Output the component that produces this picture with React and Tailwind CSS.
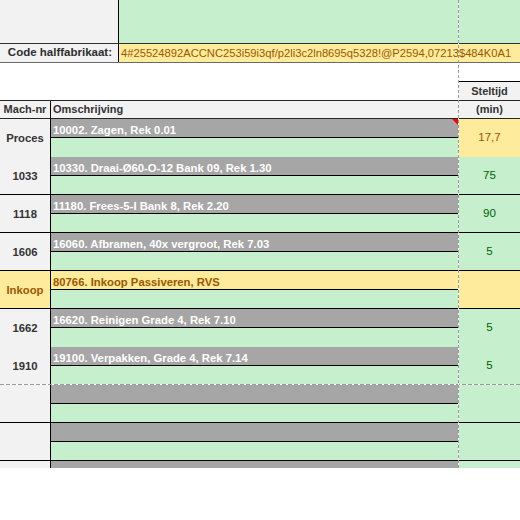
const groups = [
  {
    sep: 'solid',
    ops: [
      { mach: 'Proces', desc: '10002. Zagen, Rek 0.01', stelt: '17,7', steltYellow: true, flag: true },
      { mach: '1033', desc: '10330. Draai-Ø60-O-12 Bank 09, Rek 1.30', stelt: '75' },
    ],
  },
  { sep: 'solid', ops: [{ mach: '1118', desc: '11180. Frees-5-I Bank 8, Rek 2.20', stelt: '90' }] },
  { sep: 'solid', ops: [{ mach: '1606', desc: '16060. Afbramen, 40x vergroot, Rek 7.03', stelt: '5' }] },
  { sep: 'solid', ops: [{ mach: 'Inkoop', desc: '80766. Inkoop Passiveren, RVS', inkoop: true }] },
  {
    sep: 'dashed',
    ops: [
      { mach: '1662', desc: '16620. Reinigen Grade 4, Rek 7.10', stelt: '5' },
      { mach: '1910', desc: '19100. Verpakken, Grade 4, Rek 7.14', stelt: '5' },
    ],
  },
  { sep: 'solid', ops: [{}] },
  { sep: 'solid', ops: [{}] },
];

function Group({ group }) {
  const h = group.ops.length === 2 ? 'h-[75px]' : 'h-[37px]';
  return (
    <>
      <div className={`flex ${h} overflow-hidden`}>
        {/* Mach-nr */}
        <div className="w-[51px] shrink-0 border-r border-black flex flex-col">
          {group.ops.map((op, i) => (
            <div
              key={i}
              className={`h-[38px] shrink-0 flex items-center justify-center text-[11.3px] font-bold ${
                op.inkoop ? 'bg-[#ffeb9c] text-[#9c5700]' : 'bg-[#f2f2f2] text-[#333]'
              }`}
            >
              {op.mach}
            </div>
          ))}
        </div>

        {/* Omschrijving */}
        <div className="w-[408px] shrink-0 flex flex-col">
          {group.ops.map((op, i) => (
            <div key={i} className="h-[38px] shrink-0 flex flex-col">
              <div
                className={`relative h-[19px] shrink-0 border-b border-black flex items-end pl-[2px] text-[11.3px] leading-[14px] font-bold whitespace-nowrap ${
                  op.inkoop ? 'bg-[#ffeb9c] text-[#9c5700]' : 'bg-[#a6a6a6] text-white'
                }`}
              >
                {op.desc}
                {op.flag && (
                  <svg className="absolute top-0 right-[1px]" width="6" height="6" viewBox="0 0 6 6">
                    <polygon points="0,0 6,0 6,6" fill="#ff0000" />
                  </svg>
                )}
              </div>
              <div className="h-[19px] shrink-0 bg-[#c6efce]" />
            </div>
          ))}
        </div>

        {/* Steltijd */}
        <div className="flex-1 flex flex-col">
          {group.ops.map((op, i) => (
            <div
              key={i}
              className={`h-[38px] shrink-0 flex items-center justify-center text-[11.5px] ${
                op.steltYellow || op.inkoop ? 'bg-[#ffeb9c] text-[#9c5700]' : 'bg-[#c6efce] text-[#006100]'
              }`}
            >
              {op.stelt}
            </div>
          ))}
        </div>
      </div>
      {group.sep === 'dashed' ? (
        <div className="h-px bg-[repeating-linear-gradient(to_right,#9a9a9a_0_4px,#ffffff_4px_6px)]" />
      ) : (
        <div className="h-px bg-black" />
      )}
    </>
  );
}

export default function App() {
  return (
    <div className="relative w-[520px] h-[520px] overflow-hidden bg-white font-['Liberation_Sans',Arial,sans-serif] text-[#333]">
      {/* Top block */}
      <div className="flex h-[43px]">
        <div className="w-[119px] shrink-0 bg-[#f2f2f2] border-r border-black" />
        <div className="flex-1 bg-[#c6efce]" />
      </div>
      <div className="h-px bg-[#303030]" />

      {/* Code halffabrikaat */}
      <div className="flex h-[18px]">
        <div className="w-[119px] shrink-0 bg-[#f2f2f2] border-r border-black flex items-center justify-end pr-[6px] text-[11.5px] font-bold text-[#2e2e2e] whitespace-nowrap">
          Code halffabrikaat:
        </div>
        <div className="flex-1 min-w-0 bg-[#ffeb9c] flex items-center pl-[2px] text-[11.2px] text-[#9c5700] whitespace-nowrap overflow-hidden">
          4#25524892ACCNC253i59i3qf/p2li3c2ln8695q5328!@P2594,07213$484K0A1
        </div>
      </div>
      <div className="h-px bg-[#6b6b6b]" />

      <div className="h-[18px]" />

      {/* Header row 1 */}
      <div className="flex h-[19px]">
        <div className="flex-1" />
        <div className="w-[61px] shrink-0 bg-[#f2f2f2] border-t border-black flex items-center justify-center text-[11px] font-bold text-[#333]">
          Steltijd
        </div>
      </div>
      <div className="h-px bg-[#262626]" />

      {/* Header row 2 */}
      <div className="flex h-[17px] bg-[#f2f2f2] text-[11px] font-bold text-[#333]">
        <div className="w-[51px] shrink-0 border-r border-black flex items-center justify-center">Mach-nr</div>
        <div className="w-[408px] shrink-0 flex items-center pl-[2px]">Omschrijving</div>
        <div className="flex-1 flex items-center justify-center">(min)</div>
      </div>
      <div className="h-px bg-[#262626]" />

      {groups.map((g, i) => (
        <Group key={i} group={g} />
      ))}

      {/* Partial row cut off at the bottom */}
      <div className="flex h-[7px]">
        <div className="w-[51px] shrink-0 bg-[#f2f2f2] border-r border-black" />
        <div className="w-[408px] shrink-0 bg-[#a6a6a6]" />
        <div className="flex-1 bg-[#c6efce]" />
      </div>

      {/* Page break line */}
      <div className="absolute left-[458px] top-0 w-px h-[468px] bg-[repeating-linear-gradient(to_bottom,#9a9a9a_0_3px,#ffffff_3px_5px)]" />
    </div>
  );
}
